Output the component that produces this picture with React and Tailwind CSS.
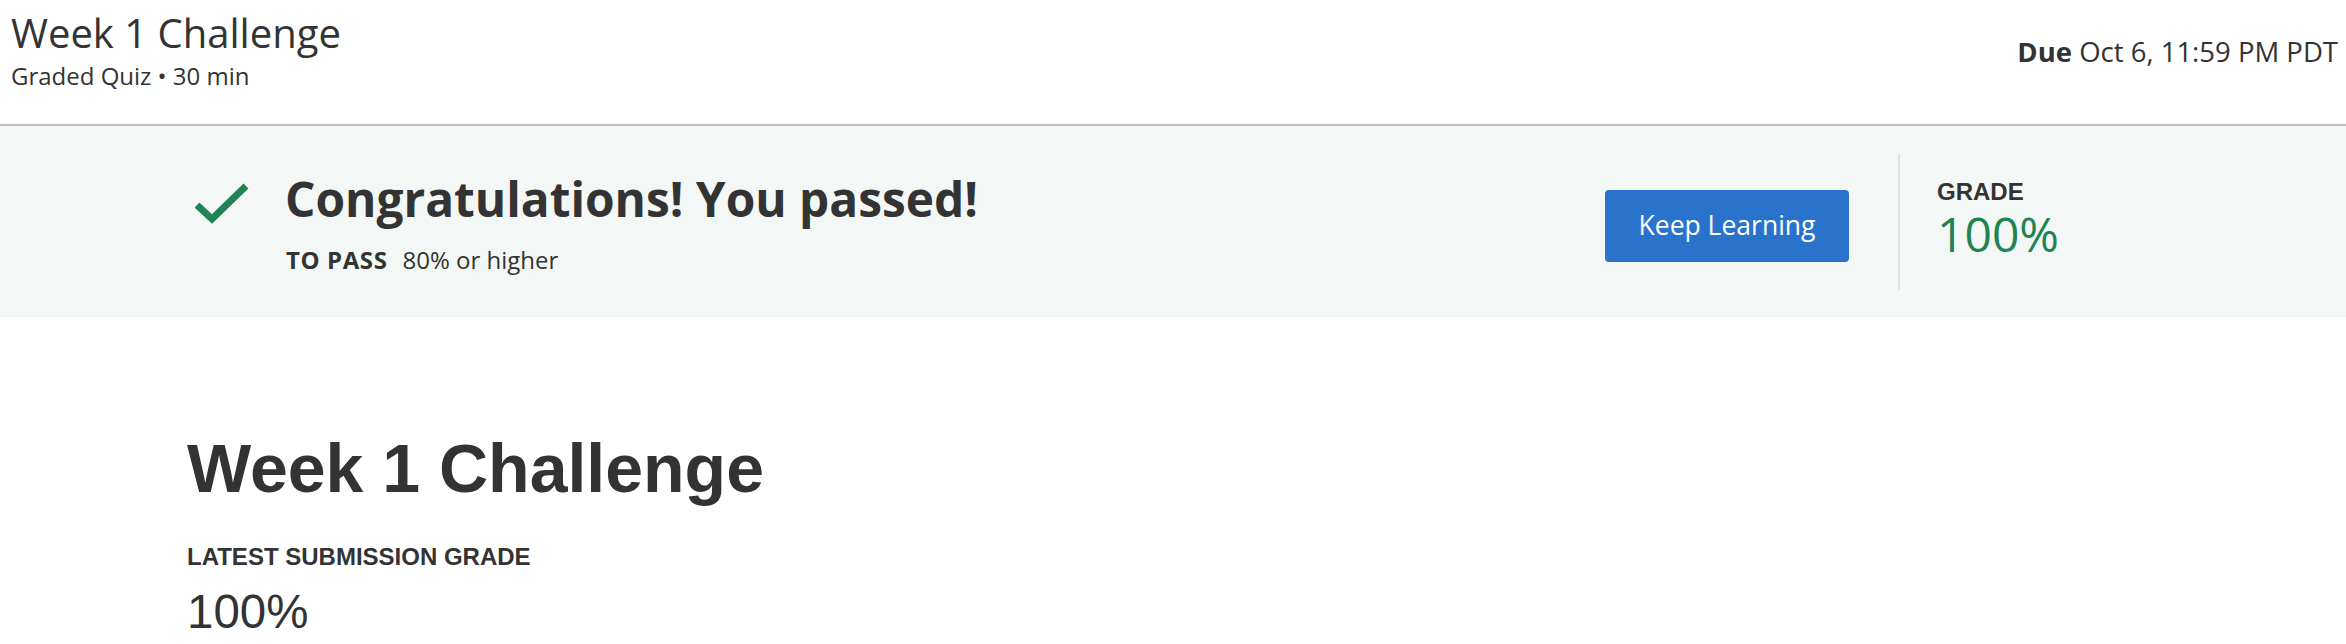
import React from "react";

const OPEN = "font-['Open_Sans',sans-serif]";
const ARIAL = "font-['Liberation_Sans',Arial,sans-serif]";

function Check() {
  return (
    <svg width="54" height="42" viewBox="0 0 54 42" className="mt-[16px] shrink-0">
      <polyline points="2,22 17,36 51,3" fill="none" stroke="#1f8354" strokeWidth="7" />
    </svg>
  );
}

export default function App() {
  return (
    <div className="min-h-screen bg-white text-[#333]">
      {/* header */}
      <header className={`flex justify-between h-[126px] border-b-2 border-[#bdbdbd] pl-[11px] pr-[8px] ${OPEN}`}>
        <div className="pt-[9px]">
          <h1 className="text-[40px] leading-[48px] font-normal">Week 1 Challenge</h1>
          <p className="text-[24px] leading-[38px]">Graded Quiz • 30 min</p>
        </div>
        <div className="pt-[34px] text-[27.5px] leading-[36px]">
          <span className="font-bold">Due</span> Oct 6, 11:59 PM PDT
        </div>
      </header>

      {/* result banner */}
      <section className="flex items-center h-[191px] bg-[#f3f8f6] pl-[195px]">
        <div className={`flex flex-1 items-start gap-[36px] ${OPEN}`}>
          <Check />
          <div className="mt-[2px]">
            <h2 className="text-[47.8px] leading-[60px] font-bold">Congratulations! You passed!</h2>
            <p className="mt-[15px] text-[24px] leading-[32px] ml-[1px]">
              <span className="font-bold tracking-[0.6px] mr-[15px]">TO PASS</span>80% or higher
            </p>
          </div>
        </div>
        <button className={`w-[244px] h-[72px] rounded-[4px] bg-[#2a73cc] text-white text-[26.5px] ${OPEN} mt-[9px]`}>
          Keep Learning
        </button>
        <div className="ml-[49px] w-[2px] h-[136px] bg-[#e1e4e3]" />
        <div className="ml-[37px] w-[409px] -mt-[3px]">
          <p className={`text-[24px] leading-[28px] font-bold ${ARIAL}`}>GRADE</p>
          <p className={`text-[48px] leading-[56px] font-normal text-[#1f8354] ${OPEN}`}>100%</p>
        </div>
      </section>

      {/* body */}
      <main className={`pl-[187px] pt-[117px] ${ARIAL}`}>
        <h1 className="text-[68px] leading-[68px] font-bold">Week 1 Challenge</h1>
        <p className="mt-[41px] text-[24px] leading-[28px] font-bold">LATEST SUBMISSION GRADE</p>
        <p className="mt-[13px] text-[47.5px] leading-[56px]">100%</p>
      </main>
    </div>
  );
}
